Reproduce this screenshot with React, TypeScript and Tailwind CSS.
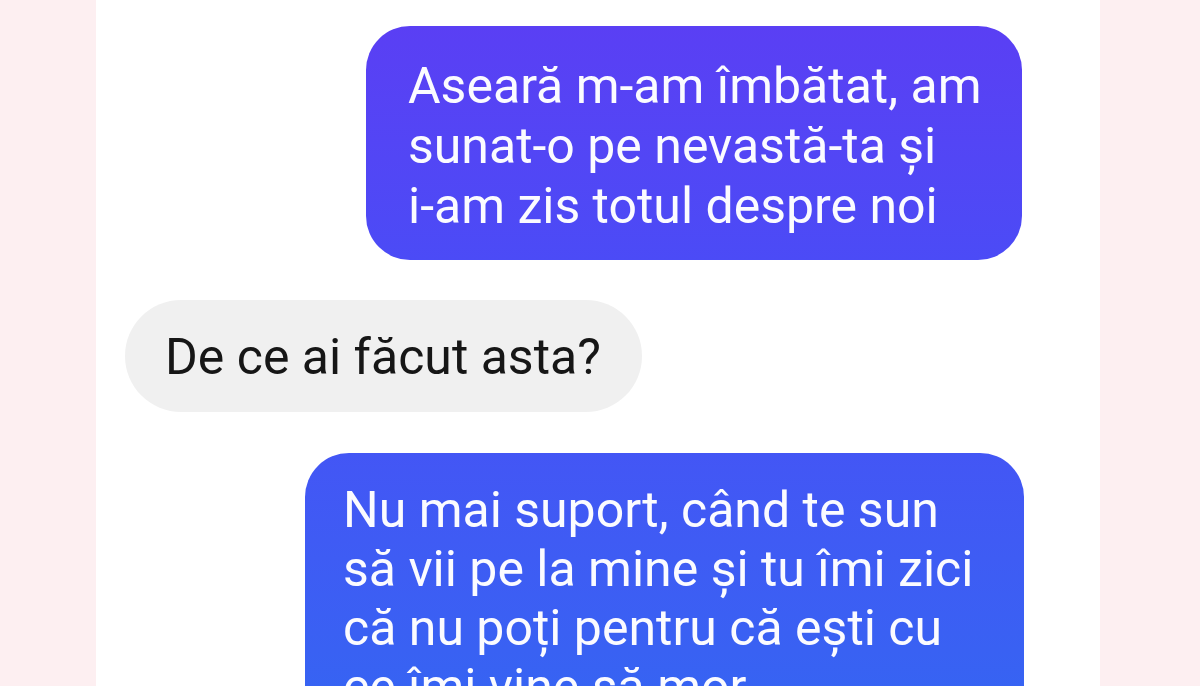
import React from 'react'

const font = { fontFamily: 'Roboto, "Noto Sans", sans-serif' }

const App = () => {
  return (
    <div className="flex h-[686px] w-[1200px] overflow-hidden bg-[#fdeff1]" style={font}>
      <div className="w-[96px] shrink-0" />

      <main className="flex w-[1004px] shrink-0 flex-col bg-white pt-[26px]">
        {/* sent */}
        <div className="mr-[78px] w-[656px] shrink-0 self-end rounded-[44px] bg-gradient-to-b from-[#5a3ff4] to-[#4b4bf6] pl-[42px] pt-[30px] pb-[24px] text-[50px] leading-[60px] whitespace-nowrap text-[#fbfbff]">
          Aseară m-am îmbătat, am
          <br />
          sunat-o pe nevastă-ta și
          <br />
          i-am zis totul despre noi
        </div>

        {/* received */}
        <div className="mt-[40px] ml-[29px] h-[112px] w-[517px] shrink-0 rounded-full bg-[#f0f0f0] pl-[40px] pt-[27px] text-[50px] leading-[60px] whitespace-nowrap text-[#161616]">
          De ce ai făcut asta?
        </div>

        {/* sent */}
        <div className="mt-[41px] mr-[76px] w-[719px] shrink-0 self-end rounded-[44px] bg-gradient-to-b from-[#4356f5] to-[#3366f2] pl-[38px] pt-[28px] pb-[30px] text-[50px] leading-[59px] whitespace-nowrap text-[#fbfbff]">
          Nu mai suport, când te sun
          <br />
          să vii pe la mine și tu îmi zici
          <br />
          că nu poți pentru că ești cu
          <br />
          ce îmi vine să mor
        </div>
      </main>

      <div className="flex-1" />
    </div>
  )
}

export default App
